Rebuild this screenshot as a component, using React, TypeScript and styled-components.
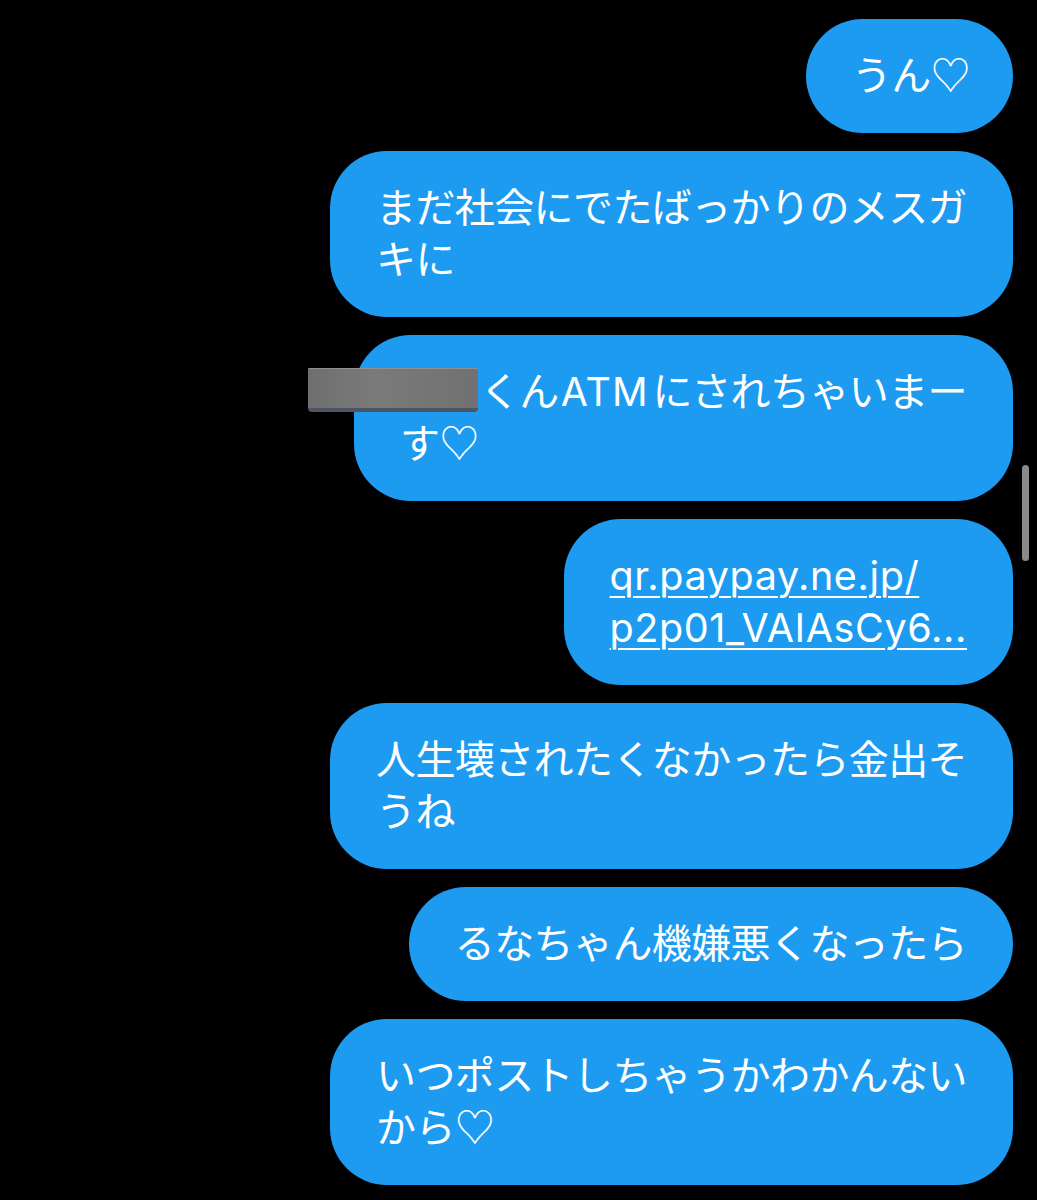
import React from "react";
import styled, { createGlobalStyle } from "styled-components";

const GlobalStyle = createGlobalStyle`
  html, body {
    margin: 0;
    padding: 0;
    background: #000;
  }
  #root {
    min-height: 1200px;
    background: #000;
  }
`;

const Thread = styled.main`
  display: flex;
  flex-direction: column;
  align-items: flex-end;
  gap: 18px;
  padding: 19px 24px 0 0;
  min-height: 1200px;
  box-sizing: border-box;
  background: #000;
`;

const Bubble = styled.div`
  background: #1d9bf0;
  color: #fff;
  border-radius: 57px;
  padding: 31px 46px;
  max-width: 683px;
  box-sizing: border-box;
  font-family: "Inter", "Noto Sans CJK JP", sans-serif;
  font-size: 40px;
  letter-spacing: -0.6px;
  line-height: 52px;
  white-space: nowrap;
`;

const Latin = styled.span`
  padding: 0 4px 0 2px;
  letter-spacing: 1px;
  font-size: 39.4px;
`;

const Heart = styled.span`
  font-family: "Noto Sans CJK JP", sans-serif;
  letter-spacing: -3.6px;
  line-height: 0;
`;

const LinkText = styled.a`
  color: #fff;
  text-decoration: underline;
  text-decoration-thickness: 2px;
  text-underline-offset: 6px;
  font-size: 39.5px;
  letter-spacing: 0.6px;
`;

const NameSlot = styled.span`
  display: inline-block;
  position: relative;
  width: 80px;
  height: 52px;
  vertical-align: top;
`;

const Redaction = styled.span`
  position: absolute;
  left: -92px;
  top: 2px;
  width: 170px;
  height: 44px;
  box-sizing: border-box;
  background: linear-gradient(90deg, #6f6f70 0%, #7a7a7a 40%, #717171 100%);
  border-top: 1px solid #8b9099;
  border-bottom: 4px solid #4e5562;
  border-radius: 1px 1px 4px 4px;
`;

const ScrollThumb = styled.div`
  position: fixed;
  top: 465px;
  right: 8px;
  width: 7px;
  height: 96px;
  border-radius: 4px;
  background: #8a8a8a;
`;

type Msg = { lines: React.ReactNode[] };

const messages: Msg[] = [
  { lines: [<>うん<Heart>♡</Heart></>] },
  { lines: ["まだ社会にでたばっかりのメスガ", "キに"] },
  {
    lines: [
      <>
        <NameSlot>
          <Redaction />
        </NameSlot>
        くん<Latin>ATM</Latin>にされちゃいまー
      </>,
      <>す<Heart>♡</Heart></>,
    ],
  },
  {
    lines: [
      <LinkText href="#">qr.paypay.ne.jp/</LinkText>,
      <LinkText href="#">p2p01_VAIAsCy6...</LinkText>,
    ],
  },
  { lines: ["人生壊されたくなかったら金出そ", "うね"] },
  { lines: ["るなちゃん機嫌悪くなったら"] },
  { lines: ["いつポストしちゃうかわかんない", <>から<Heart>♡</Heart></>] },
];

export default function App() {
  return (
    <>
      <GlobalStyle />
      <Thread>
        {messages.map((m, i) => (
          <Bubble key={i}>
            {m.lines.map((l, j) => (
              <React.Fragment key={j}>
                {j > 0 && <br />}
                {l}
              </React.Fragment>
            ))}
          </Bubble>
        ))}
      </Thread>
      <ScrollThumb />
    </>
  );
}
